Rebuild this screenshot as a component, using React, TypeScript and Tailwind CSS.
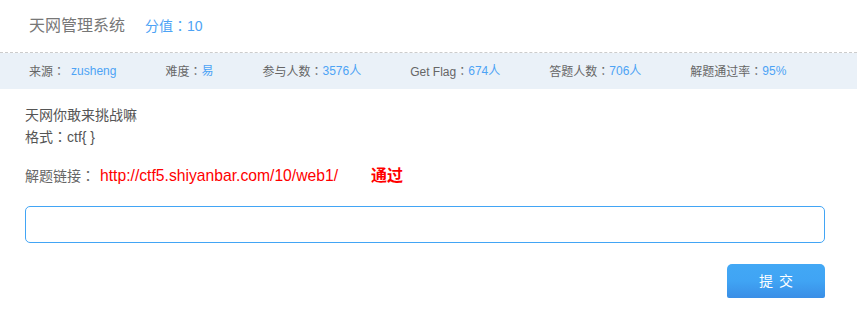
import React from 'react';

// fullwidth colon centred, as in the original font
const Colon = () => <span className="font-['Noto_Sans_CJK_TC',sans-serif]">：</span>;

const stats = [
  { label: '来源', value: 'zusheng', gap: true },
  { label: '难度', value: '易' },
  { label: '参与人数', value: '3576人' },
  { label: 'Get Flag', value: '674人' },
  { label: '答题人数', value: '706人' },
  { label: '解题通过率', value: '95%' },
];

export default function App() {
  return (
    <div className="w-[857px] h-[318px] bg-white font-['Liberation_Sans','Noto_Sans_CJK_SC',sans-serif] overflow-hidden">
      <div className="h-[53px] pl-[29px] flex items-center border-b border-dashed border-[#cccccc]">
        <span className="text-[16px] text-[#777777]">天网管理系统</span>
        <span className="ml-[20px] text-[14px] text-[#4da3f5]">
          分值<Colon />10
        </span>
      </div>
      <div className="h-[36px] bg-[#eaf1f8] px-[29px] flex items-center gap-[49px] text-[12px]">
        {stats.map((s) => (
          <div key={s.label} className="flex items-center">
            <span className="text-[#666666]">
              {s.label}
              <Colon />
            </span>
            {s.gap && <span className="w-[6px]" />}
            <span className="text-[#4da3f5]">{s.value}</span>
          </div>
        ))}
      </div>
      <div className="px-[25px] pr-[32px] pt-[16px]">
        <p className="text-[14px] leading-[21px] text-[#555555]">天网你敢来挑战嘛</p>
        <p className="text-[14px] leading-[21px] text-[#555555]">
          格式<Colon />ctf{'{ }'}
        </p>
        <div className="mt-[17px] flex items-center h-[21px]">
          <span className="text-[14px] text-[#666666]">
            解题链接<Colon />
          </span>
          <a className="ml-[5px] text-[15.7px] text-[#ff0000]" href="#">
            http://ctf5.shiyanbar.com/10/web1/
          </a>
          <span className="ml-[33px] text-[16px] font-bold text-[#ff0000]">通过</span>
        </div>
        <input
          className="mt-[20px] block w-full h-[37px] rounded-[5px] border border-[#42a5f5] outline-none px-3 text-[14px]"
          type="text"
        />
        <div className="mt-[21px] flex justify-end">
          <button className="w-[98px] h-[34px] rounded-t-[5px] rounded-b-[2px] bg-gradient-to-b from-[#42a8f5] via-[#40a4f4] to-[#3a8ee6] text-white text-[14px] tracking-[6px] pl-[6px]">
            提交
          </button>
        </div>
      </div>
    </div>
  );
}
